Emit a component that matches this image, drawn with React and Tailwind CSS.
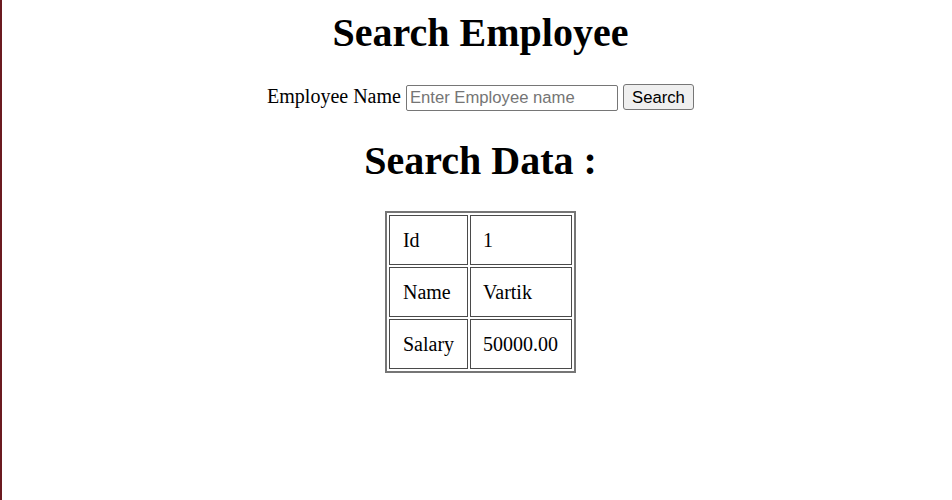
import React, { useState } from "react";

const SearchEmployee = () => {
  const [name, setName] = useState("");

  const employee = { id: 1, name: "Vartik", salary: "50000.00" };

  return (
    <div className="min-h-screen bg-white border-l-2 border-[#6b1a20] pl-[7px] text-black font-['Liberation_Serif',serif]">
      {/* Header */}
      <h1 className="pt-[11px] text-center text-[40px] leading-[44px] font-bold">
        Search Employee
      </h1>

      {/* Search form */}
      <form
        className="mt-[29px] flex items-baseline justify-center gap-[5px]"
        onSubmit={(e) => e.preventDefault()}
      >
        <label className="text-[20px] leading-[23px]">Employee Name</label>
        <input
          type="text"
          value={name}
          onChange={(e) => setName(e.target.value)}
          placeholder="Enter Employee name"
          className="w-[212px] h-[26px] px-[3px] border border-[#767676] rounded-[2px] bg-white text-[16.67px] font-['Liberation_Sans',Arial,sans-serif] placeholder:text-[#757575] outline-none"
        />
        <button
          type="submit"
          className="w-[71px] h-[26px] border border-[#767676] rounded-[3px] bg-[#efefef] text-[16.67px] font-['Liberation_Sans',Arial,sans-serif]"
        >
          Search
        </button>
      </form>

      {/* Result */}
      <h2 className="mt-[28px] text-center text-[40px] leading-[44px] font-bold">
        Search Data :
      </h2>

      <table className="mx-auto mt-[28px] border-2 border-[#767676] border-separate border-spacing-[2px] text-[20px] leading-[23px]">
        <tbody>
          <tr>
            <td className="border border-[#4a4a4a] px-[12.5px] py-[12.5px]">Id</td>
            <td className="border border-[#4a4a4a] px-[12.5px] py-[12.5px]">{employee.id}</td>
          </tr>
          <tr>
            <td className="border border-[#4a4a4a] px-[12.5px] py-[12.5px]">Name</td>
            <td className="border border-[#4a4a4a] px-[12.5px] py-[12.5px]">{employee.name}</td>
          </tr>
          <tr>
            <td className="border border-[#4a4a4a] px-[12.5px] py-[12.5px]">Salary</td>
            <td className="border border-[#4a4a4a] px-[12.5px] py-[12.5px]">{employee.salary}</td>
          </tr>
        </tbody>
      </table>
    </div>
  );
};

export default SearchEmployee;
